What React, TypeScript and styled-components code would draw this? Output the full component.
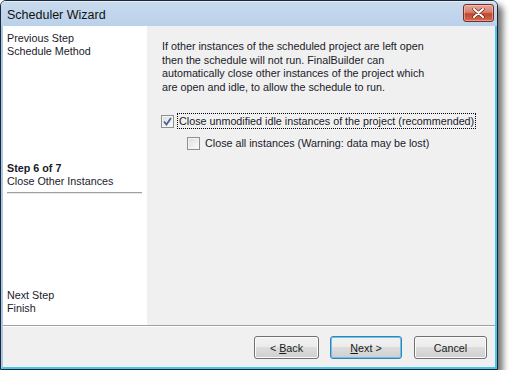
import React from "react";
import styled, { createGlobalStyle } from "styled-components";

const Global = createGlobalStyle`
  html, body { margin: 0; padding: 0; background: #ffffff; }
  body { font-family: "Liberation Sans", Arial, sans-serif; }
  * { box-sizing: border-box; }
`;

const Window = styled.div`
  width: 498px;
  height: 370px;
  display: flex;
  flex-direction: column;
  border: 1px solid #1c2733;
  border-radius: 6px 6px 0 0;
  background: #bcd4ec;
  box-shadow: 5px 5px 6px rgba(0, 0, 0, 0.55);
  font-family: "Liberation Sans", Arial, sans-serif;
  font-size: 10.75px;
  color: #000;
`;

const TitleBar = styled.div`
  height: 25px;
  flex: none;
  display: flex;
  align-items: center;
  justify-content: space-between;
  padding: 0 3px 0 6px;
  border-radius: 5px 5px 0 0;
  background: linear-gradient(#c9dbee, #b9d1ea);
  border-top: 1px solid #e4eef8;
`;

const Title = styled.span`
  font-size: 12.5px;
  color: #111;
  padding-top: 1px;
`;

const CloseButton = styled.div`
  width: 31px;
  height: 18px;
  margin-top: -3px;
  border: 1px solid #7a2b22;
  border-radius: 3px;
  background: linear-gradient(#e6a79b 0%, #d7806f 45%, #c2472f 55%, #d06a4f 100%);
  box-shadow: inset 0 0 0 1px rgba(255, 220, 210, 0.45);
  display: flex;
  align-items: center;
  justify-content: center;
`;

const Client = styled.div`
  flex: 1;
  display: flex;
  flex-direction: column;
  background: #f0f0f0;
  border-style: solid;
  border-width: 0 2px 2px 2px;
  border-color: #b4d2ee #47c3ec #47c3ec #a8c8e6;
`;

const Main = styled.div`
  flex: 1;
  display: flex;
`;

const Sidebar = styled.div`
  width: 144px;
  flex: none;
  background: #ffffff;
  display: flex;
  flex-direction: column;
  padding: 6px 5px 10px 4px;
  line-height: 13px;
  color: #1a1a2a;
`;

const StepGroup = styled.div<{ $top?: number }>`
  display: flex;
  flex-direction: column;
  margin-top: ${(p) => (p.$top === undefined ? "auto" : `${p.$top}px`)};
`;

const StepTitle = styled.span`
  font-weight: bold;
`;

const StepRule = styled.div`
  height: 2px;
  margin-top: 4px;
  border-top: 1px solid #a0a0a0;
  border-bottom: 1px solid #e6e6e6;
`;

const Content = styled.div`
  flex: 1;
  padding: 14px 12px 0 15px;
  display: flex;
  flex-direction: column;
`;

const Paragraph = styled.p`
  margin: 0;
  width: 275px;
  line-height: 13.6px;
  color: #1a1a2a;
`;

const OptionRow = styled.label<{ $indent: number; $top: number }>`
  display: flex;
  align-items: center;
  margin-left: ${(p) => p.$indent}px;
  margin-top: ${(p) => p.$top}px;
  gap: 3px;
  height: 16px;
`;

const Box = styled.span`
  width: 13px;
  height: 13px;
  flex: none;
  border: 1px solid #8e8f8f;
  background: linear-gradient(135deg, #dcdcdc, #fdfdfd);
  box-shadow: inset 0 0 0 1px #f4f4f4;
  display: flex;
  align-items: center;
  justify-content: center;
`;

const OptionText = styled.span<{ $focus?: boolean }>`
  padding: 1px 1px;
  border: 1px dotted ${(p) => (p.$focus ? "#000" : "transparent")};
  white-space: nowrap;
  color: #1a1a2a;
`;

const BottomRule = styled.div`
  height: 2px;
  border-top: 1px solid #a0a0a0;
  border-bottom: 1px solid #ffffff;
`;

const ButtonBar = styled.div`
  height: 40px;
  display: flex;
  justify-content: flex-end;
  align-items: flex-start;
  padding: 9px 8px 0 0;
`;

const Button = styled.div<{ $w: number; $gap: number; $default?: boolean }>`
  width: ${(p) => p.$w}px;
  height: 23px;
  margin-left: ${(p) => p.$gap}px;
  display: flex;
  align-items: center;
  justify-content: center;
  border: 1px solid ${(p) => (p.$default ? "#3c7fb1" : "#707070")};
  border-radius: 3px;
  background: linear-gradient(#f2f2f2 0%, #ebebeb 50%, #dddddd 50%, #cfcfcf 100%);
  box-shadow: inset 0 0 0 1px ${(p) => (p.$default ? "#62c6ef" : "#fbfbfb")};
  color: #1a1a1a;
  u { text-decoration: underline; }
`;

function Check() {
  return (
    <svg width="9" height="9" viewBox="0 0 9 9">
      <path d="M1 4.5 L3.5 7.5 L8 1" fill="none" stroke="#4a5f97" strokeWidth="1.8" />
    </svg>
  );
}

export default function App() {
  return (
    <>
      <Global />
      <Window>
        <TitleBar>
          <Title>Scheduler Wizard</Title>
          <CloseButton>
            <svg width="13" height="10" viewBox="0 0 13 10">
              <path d="M2 1 L11 9 M11 1 L2 9" stroke="#5a1a12" strokeWidth="3.2" strokeLinecap="round" />
              <path d="M2 1 L11 9 M11 1 L2 9" stroke="#ffffff" strokeWidth="2" strokeLinecap="round" />
            </svg>
          </CloseButton>
        </TitleBar>
        <Client>
          <Main>
            <Sidebar>
              <StepGroup $top={0}>
                <span>Previous Step</span>
                <span>Schedule Method</span>
              </StepGroup>
              <StepGroup $top={104}>
                <StepTitle>Step 6 of 7</StepTitle>
                <span>Close Other Instances</span>
                <StepRule />
              </StepGroup>
              <StepGroup>
                <span>Next Step</span>
                <span>Finish</span>
              </StepGroup>
            </Sidebar>
            <Content>
              <Paragraph>
                If other instances of the scheduled project are left open then the schedule will not run. FinalBuilder can
                automatically close other instances of the project which are open and idle, to allow the schedule to run.
              </Paragraph>
              <OptionRow $indent={-1} $top={19}>
                <Box>
                  <Check />
                </Box>
                <OptionText $focus>Close unmodified idle instances of the project (recommended)</OptionText>
              </OptionRow>
              <OptionRow $indent={25} $top={6}>
                <Box />
                <OptionText>Close all instances (Warning: data may be lost)</OptionText>
              </OptionRow>
            </Content>
          </Main>
          <BottomRule />
          <ButtonBar>
            <Button $w={65} $gap={0}>
              &lt;&nbsp;<u>B</u>ack
            </Button>
            <Button $w={72} $gap={11} $default>
              <u>N</u>ext&nbsp;&gt;
            </Button>
            <Button $w={73} $gap={12}>
              Cancel
            </Button>
          </ButtonBar>
        </Client>
      </Window>
    </>
  );
}
